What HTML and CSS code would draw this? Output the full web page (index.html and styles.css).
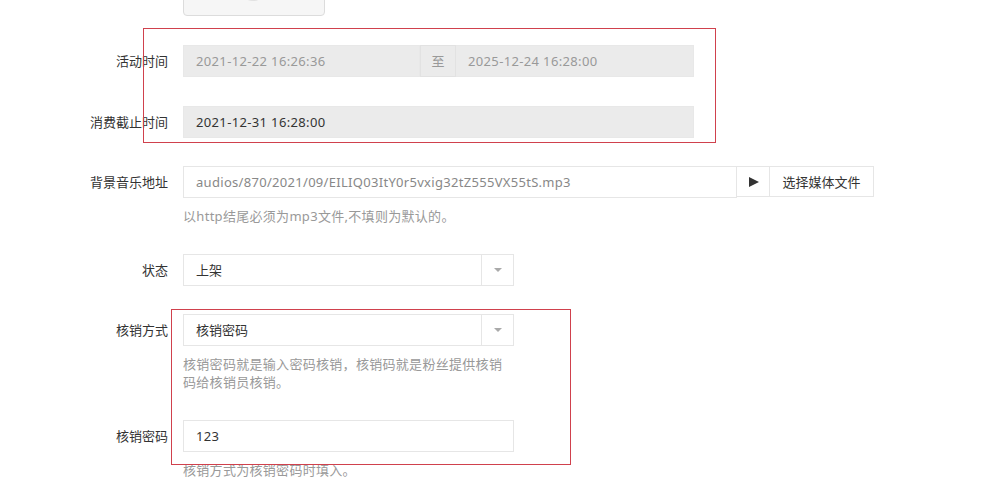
FILE: index.html
```html
<!DOCTYPE html>
<html lang="zh-CN">
<head>
<meta charset="utf-8">
<title>表单</title>
<link rel="stylesheet" href="styles.css">
</head>
<body>
<div class="page">
  <div class="group thumb-group">
    <div class="label"></div>
    <div class="thumb"><span class="thumb-dot"></span></div>
  </div>

  <div class="group">
    <div class="label">活动时间</div>
    <div class="field">
      <div class="input-group date-group">
        <div class="ctrl disabled muted date-a">2021-12-22 16:26:36</div>
        <div class="addon addon-grey">至</div>
        <div class="ctrl disabled muted date-b">2025-12-24 16:28:00</div>
      </div>
    </div>
  </div>

  <div class="group">
    <div class="label">消费截止时间</div>
    <div class="field">
      <div class="ctrl disabled date-full">2021-12-31 16:28:00</div>
    </div>
  </div>

  <div class="group">
    <div class="label">背景音乐地址</div>
    <div class="field">
      <div class="input-group">
        <div class="ctrl audio">audios/870/2021/09/EILIQ03ItY0r5vxig32tZ555VX55tS.mp3</div>
        <div class="addon play"><span class="play-tri"></span></div>
        <div class="addon btn">选择媒体文件</div>
      </div>
      <div class="help">以http结尾必须为mp3文件,不填则为默认的。</div>
    </div>
  </div>

  <div class="group">
    <div class="label">状态</div>
    <div class="field">
      <div class="select">
        <div class="select-text">上架</div>
        <div class="select-arrow"><span class="caret"></span></div>
      </div>
    </div>
  </div>

  <div class="group">
    <div class="label">核销方式</div>
    <div class="field">
      <div class="select">
        <div class="select-text">核销密码</div>
        <div class="select-arrow"><span class="caret"></span></div>
      </div>
      <div class="help help-narrow">核销密码就是输入密码核销，核销码就是粉丝提供核销码给核销员核销。</div>
    </div>
  </div>

  <div class="group">
    <div class="label">核销密码</div>
    <div class="field">
      <div class="ctrl code">123</div>
      <div class="help">核销方式为核销密码时填入。</div>
    </div>
  </div>

  <div class="mark mark-1"></div>
  <div class="mark mark-2"></div>
</div>
</body>
</html>
```

FILE: styles.css
```css
* { box-sizing: border-box; }

html, body {
  margin: 0;
  padding: 0;
  background: #fff;
}

body {
  font-family: "Noto Sans", "Noto Sans CJK SC", sans-serif;
  font-size: 13px;
  color: #333;
  overflow: hidden;
}

.page {
  position: relative;
  width: 989px;
  height: 494px;
  overflow: hidden;
}

.group {
  display: flex;
  align-items: flex-start;
  margin-bottom: 28.5px;
}

.label {
  width: 168px;
  flex: none;
  margin-right: 15px;
  text-align: right;
  line-height: 32px;
  height: 32px;
  color: #333;
}

.field {
  display: flex;
  flex-direction: column;
}

.thumb-group {
  margin-top: -34px;
  margin-bottom: 29px;
}

.thumb {
  position: relative;
  width: 142px;
  height: 50px;
  border: 1px solid #dcdcdc;
  border-radius: 4px;
  background: #f6f6f6;
  overflow: hidden;
}

.thumb-dot {
  position: absolute;
  left: 58px;
  top: 18px;
  width: 22px;
  height: 16px;
  border-radius: 50%;
  background: #e2e2e2;
}

.input-group {
  display: flex;
  height: 32px;
}

.ctrl {
  height: 32px;
  border: 1px solid #e6e6e6;
  padding: 0 12px;
  line-height: 30px;
  white-space: nowrap;
  overflow: hidden;
  color: #333;
  background: #fff;
  letter-spacing: 0.35px;
}

.disabled {
  background: #ebebeb;
  border-color: #e8e8e8;
}

.muted { color: #999; }

.date-a { width: 237px; }
.date-b { width: 238px; border-left: none; }
.date-full { width: 511px; }

.addon {
  height: 32px;
  border: 1px solid #e6e6e6;
  border-left: none;
  line-height: 30px;
  text-align: center;
  flex: none;
}

.addon-grey {
  width: 36px;
  background: #ebebeb;
  border-color: #e2e2e2;
  border-left: 1px solid #e2e2e2;
  color: #999;
}

.audio {
  width: 554px;
  color: #888;
  letter-spacing: 0.3px;
}

.play {
  width: 33px;
  height: 31px;
  display: flex;
  align-items: center;
  justify-content: center;
  background: #fff;
}

.play-tri {
  display: block;
  width: 0;
  height: 0;
  border-left: 10px solid #333;
  border-top: 5.5px solid transparent;
  border-bottom: 5.5px solid transparent;
  margin-left: 1px;
}

.btn {
  width: 104px;
  height: 31px;
  background: #fff;
  color: #333;
}

.help {
  margin-top: 9px;
  line-height: 18px;
  color: #999;
  letter-spacing: 0.3px;
}

.help-narrow { width: 325px; }

.select {
  display: flex;
  width: 331px;
  height: 32px;
  border: 1px solid #e6e6e6;
  background: #fff;
}

.select-text {
  flex: 1;
  padding: 0 12px;
  line-height: 30px;
  color: #333;
}

.select-arrow {
  width: 32px;
  border-left: 1px solid #e6e6e6;
  display: flex;
  align-items: center;
  justify-content: center;
}

.caret {
  display: block;
  width: 0;
  height: 0;
  border-top: 4px solid #aaa;
  border-left: 4.5px solid transparent;
  border-right: 4.5px solid transparent;
}

.code { width: 331px; }

.mark {
  position: absolute;
  border: 1px solid #d0414d;
  pointer-events: none;
}

.mark-1 {
  left: 143px;
  top: 28px;
  width: 573px;
  height: 115px;
}

.mark-2 {
  left: 171px;
  top: 309px;
  width: 400px;
  height: 156px;
}
```
